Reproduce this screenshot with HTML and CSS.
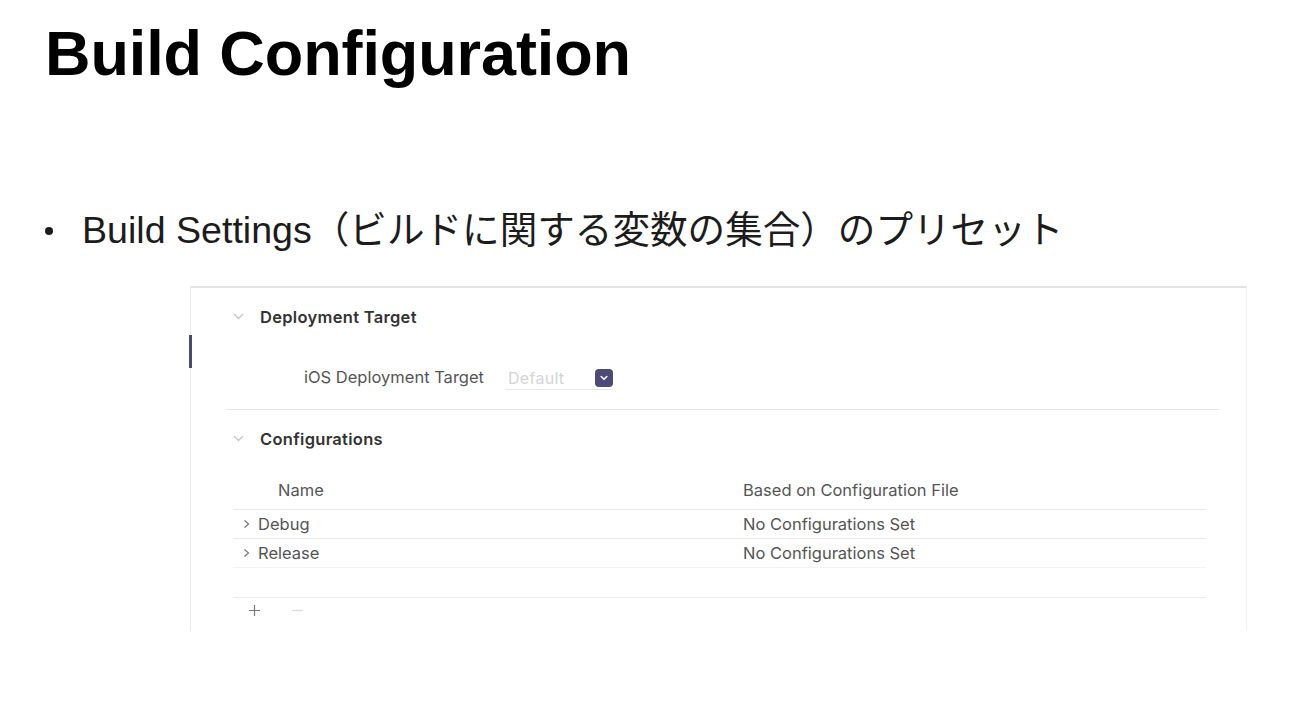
FILE: index.html
```html
<!DOCTYPE html>
<html lang="ja">
<head>
    <meta charset="UTF-8">
    <meta name="viewport" content="width=device-width, initial-scale=1.0">
    <title>Build Configuration</title>
    <link rel="stylesheet" href="styles.css">
</head>
<body>
    <h1 class="title">Build Configuration</h1>

    <ul class="points">
        <li>Build Settings（ビルドに関する変数の集合）のプリセット</li>
    </ul>

    <div class="panel">
        <span class="accent"></span>

        <div class="section-head">
            <svg class="disclosure" width="11" height="7" viewBox="0 0 11 7"><polyline points="1,1 5.5,5.5 10,1" /></svg>
            <span>Deployment Target</span>
        </div>
        <div class="field">
            <span class="field-label">iOS Deployment Target</span>
            <div class="popup">
                <span class="placeholder">Default</span>
                <span class="popup-btn">
                    <svg width="8" height="6" viewBox="0 0 8 6"><polyline points="1.2,1.5 4,4.3 6.8,1.5" /></svg>
                </span>
            </div>
        </div>
        <div class="divider"></div>

        <div class="section-head">
            <svg class="disclosure" width="11" height="7" viewBox="0 0 11 7"><polyline points="1,1 5.5,5.5 10,1" /></svg>
            <span>Configurations</span>
        </div>

        <div class="table">
            <div class="table-head">
                <span class="col-name">Name</span>
                <span class="col-file">Based on Configuration File</span>
            </div>
            <div class="row">
                <span class="col-name"><svg class="expand" width="7" height="10" viewBox="0 0 7 10"><polyline points="1.5,1.5 5.5,5 1.5,8.5" /></svg>Debug</span>
                <span class="col-file">No Configurations Set</span>
            </div>
            <div class="row">
                <span class="col-name"><svg class="expand" width="7" height="10" viewBox="0 0 7 10"><polyline points="1.5,1.5 5.5,5 1.5,8.5" /></svg>Release</span>
                <span class="col-file">No Configurations Set</span>
            </div>
            <div class="row empty"></div>
            <div class="table-foot">
                <svg class="add" width="13" height="13" viewBox="0 0 13 13"><path d="M6.5 1v11M1 6.5h11" /></svg>
                <svg class="remove" width="13" height="13" viewBox="0 0 13 13"><path d="M1 6.5h11" /></svg>
            </div>
        </div>
    </div>
</body>
</html>
```

FILE: styles.css
```css
body {
    margin: 0;
    background-color: #fff;
    font-family: "Liberation Sans", Arial, "Noto Sans CJK JP", sans-serif;
    color: #111;
}
.title {
    margin: 22px 0 0 45px;
    font-size: 63px;
    line-height: 1;
    font-weight: bold;
    color: #000;
    letter-spacing: -0.1px;
}
.points {
    list-style: none;
    margin: 127px 0 0 0;
    padding: 0 0 0 45px;
}
.points li {
    font-size: 37.6px;
    line-height: 1;
    color: #1c1c1c;
    padding-left: 37px;
    position: relative;
}
.points li::before {
    content: "";
    position: absolute;
    left: 0;
    top: 15px;
    width: 8px;
    height: 8px;
    border-radius: 50%;
    background-color: #1c1c1c;
}
.panel {
    position: relative;
    margin: 36px 0 0 190px;
    width: 1055px;
    height: 343px;
    border-top: 2px solid #e4e4e4;
    border-left: 1px solid #ececec;
    border-right: 1px solid #f2f2f2;
    font-family: Inter, "Liberation Sans", sans-serif;
}
.accent {
    position: absolute;
    left: -2px;
    top: 47px;
    width: 3px;
    height: 33px;
    background-color: #4b4872;
}
.section-head {
    display: flex;
    align-items: center;
    height: 58px;
    padding-left: 42px;
    font-size: 16.5px;
    font-weight: 600;
    letter-spacing: 0.3px;
    color: #333;
}
.disclosure {
    margin-right: 16px;
    fill: none;
    stroke: #c4c4c4;
    stroke-width: 1.3;
}
.field {
    display: flex;
    align-items: center;
    height: 63px;
    padding-left: 113px;
}
.field-label {
    font-size: 16.5px;
    color: #555;
    margin-right: 21px;
}
.popup {
    display: flex;
    align-items: center;
    justify-content: space-between;
    width: 108px;
    height: 22px;
    margin-top: 3px;
    padding-left: 3px;
    box-sizing: border-box;
    border-bottom: 1px solid #e8e8e8;
}
.placeholder {
    font-size: 16px;
    letter-spacing: 0.3px;
    color: #d4d4d4;
}
.popup-btn {
    display: flex;
    align-items: center;
    justify-content: center;
    width: 18px;
    height: 18px;
    border-radius: 4px;
    background-color: #4d4a78;
}
.popup-btn svg {
    fill: none;
    stroke: #fff;
    stroke-width: 1.6;
    stroke-linecap: round;
    stroke-linejoin: round;
}
.divider {
    height: 1px;
    margin: 0 27px 0 35px;
    background-color: #e6e6e6;
}
.table {
    margin: 0 40px 0 42px;
    font-size: 16.5px;
    color: #555;
}
.table-head,
.row {
    display: grid;
    grid-template-columns: 510px 1fr;
    align-items: center;
}
.table-head {
    height: 41px;
    padding-top: 3px;
    box-sizing: border-box;
}
.table-head .col-name {
    padding-left: 45px;
}
.row {
    height: 28px;
    border-top: 1px solid #e9e9e9;
}
.row.empty {
    height: 29px;
    border-top-color: #f3f3f3;
}
.row .col-name {
    display: flex;
    align-items: center;
    padding-left: 10px;
}
.expand {
    margin-right: 8px;
    fill: none;
    stroke: #777;
    stroke-width: 1.2;
}
.table-foot {
    display: flex;
    align-items: center;
    height: 26px;
    padding-left: 15px;
    border-top: 1px solid #ececec;
}
.add {
    fill: none;
    stroke: #777;
    stroke-width: 1.2;
}
.remove {
    margin-left: 30px;
    fill: none;
    stroke: #d8d8d8;
    stroke-width: 1.2;
}
```
